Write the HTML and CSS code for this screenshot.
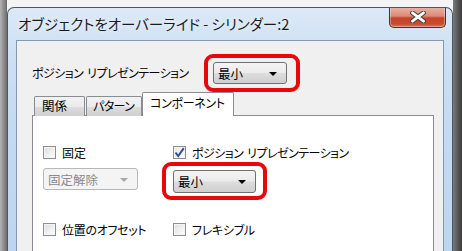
FILE: index.html
```html
<!DOCTYPE html>
<html lang="ja">
<head>
<meta charset="utf-8">
<title>オブジェクトをオーバーライド</title>
<link rel="stylesheet" href="styles.css">
</head>
<body>
<div class="window">
  <div class="titlebar">
    <div class="title">オブジェクトをオーバーライド - シリンダー:2</div>
    <div class="close">
      <svg width="16" height="12" viewBox="0 0 16 12">
        <path d="M2.5 1.8 L13.5 10.2 M13.5 1.8 L2.5 10.2" stroke="#3a3a3a" stroke-width="4.6" stroke-linecap="round"/>
        <path d="M2.5 1.8 L13.5 10.2 M13.5 1.8 L2.5 10.2" stroke="#ffffff" stroke-width="2.8" stroke-linecap="round"/>
      </svg>
    </div>
  </div>
  <div class="client">
    <div class="top-row">
      <div class="label wide">ポジション<span class="sp"></span>リプレゼンテーション</div>
      <div class="hl hl-top">
        <div class="select s-top"><span>最小</span><i class="arrow"></i></div>
      </div>
    </div>
    <div class="tabs">
      <div class="tab t1">関係</div>
      <div class="tab t2">パターン</div>
      <div class="tab active">コンポーネント</div>
    </div>
    <div class="panel">
      <div class="grid">
        <label class="check c1"><span class="box"></span><span>固定</span></label>
        <label class="check c2"><span class="box on"><svg width="11" height="11" viewBox="0 0 11 11"><path d="M1.5 5.5 L4.2 9 L9.8 1.2" fill="none" stroke="#2f4f9e" stroke-width="2"/></svg></span><span class="wide">ポジション<span class="sp"></span>リプレゼンテーション</span></label>
        <div class="select disabled"><span>固定解除</span><i class="arrow"></i></div>
        <div class="hl hl-low">
          <div class="select s-low"><span>最小</span><i class="arrow"></i></div>
        </div>
        <label class="check c1 r3"><span class="box"></span><span class="kana">位置のオフセット</span></label>
        <label class="check c2 r3"><span class="box"></span><span class="kana">フレキシブル</span></label>
      </div>
    </div>
  </div>
</div>
</body>
</html>
```

FILE: styles.css
```css
html, body {
  margin: 0;
  padding: 0;
  height: 251px;
  overflow: hidden;
}
body {
  background: linear-gradient(to right, #b4b4b4 0px, #6c6c6c 7px, #f4f4f4 7px, #f4f4f4 453px, #7a7a7a 453px, #3a3a3a 462px);
  font-family: "Noto Sans CJK JP", "Noto Sans", sans-serif;
  font-feature-settings: "palt" 1;
  color: #000;
}
.window {
  margin: 7px 0 0 7px;
  width: 446px;
  height: 244px;
  box-sizing: border-box;
  border: 1px solid #4a5866;
  border-bottom: none;
  border-radius: 7px 7px 0 0;
  background: linear-gradient(to bottom, #dce9f6 0px, #cfe1f3 40px, #c4daf0 120px, #bdd5ee 244px);
  padding: 0 8px;
  overflow: hidden;
}
.titlebar {
  height: 32px;
  display: flex;
  align-items: flex-start;
}
.title {
  margin-top: 7px;
  padding-left: 2px;
  font-size: 14.5px;
  line-height: 18px;
  color: #1b1b1b;
  text-shadow: 0 0 6px rgba(255,255,255,0.9);
  flex: 1;
  white-space: nowrap;
}
.close {
  margin-top: -1px;
  margin-right: -2px;
  width: 57px;
  height: 21px;
  box-sizing: border-box;
  border: 1px solid #5e2a20;
  border-top: none;
  border-radius: 0 0 5px 5px;
  background: linear-gradient(to bottom, #eab4a6 0%, #dc8b76 45%, #c7432b 55%, #c94a30 85%, #d8755b 100%);
  display: flex;
  align-items: center;
  justify-content: center;
  box-shadow: inset 0 0 0 1px rgba(255,255,255,0.35);
}
.client {
  border: 1px solid #8399b2;
  border-bottom: none;
  background: #f0f0f0;
  height: 210px;
  padding: 0 9px 0 15px;
  overflow: hidden;
}
.top-row {
  display: flex;
  align-items: center;
  padding-top: 13px;
}
.label {
  width: 172px;
  font-size: 12px;
  line-height: 16px;
  white-space: nowrap;
}
.wide {
  letter-spacing: -0.55px;
  white-space: nowrap;
}
.sp {
  display: inline-block;
  width: 4px;
}
.kana {
  letter-spacing: -0.3px;
  white-space: nowrap;
}
.hl {
  border: 4px solid #e8080c;
  border-radius: 9px;
}
.hl-top {
  padding: 4px 9px 4px 5px;
}
.select {
  box-sizing: border-box;
  border: 1px solid #707070;
  border-radius: 3px;
  background: linear-gradient(to bottom, #f4f4f4 0%, #ebebeb 48%, #dddddd 52%, #cfcfcf 100%);
  display: flex;
  align-items: center;
  justify-content: space-between;
  padding: 0 9px 0 4px;
  font-size: 12.5px;
  white-space: nowrap;
}
.arrow {
  width: 0;
  height: 0;
  border-left: 4px solid transparent;
  border-right: 4px solid transparent;
  border-top: 4px solid #000;
  margin-top: 1px;
}
.s-top {
  width: 74px;
  height: 22px;
}
.tabs {
  display: flex;
  align-items: flex-end;
  margin-left: 2px;
  height: 24px;
  margin-bottom: -1px;
  position: relative;
  z-index: 1;
}
.tab {
  box-sizing: border-box;
  height: 20px;
  border: 1px solid #898c95;
  border-bottom: none;
  border-radius: 2px 2px 0 0;
  background: linear-gradient(to bottom, #f2f2f2 0%, #ebebeb 50%, #dddddd 51%, #cfcfcf 100%);
  font-size: 12.5px;
  line-height: 18px;
  white-space: nowrap;
  overflow: hidden;
}
.t1 { width: 51px; margin-right: 1px; padding-left: 7px; }
.t2 { width: 56px; padding-left: 6px; font-size: 12px; letter-spacing: -0.6px; }
.tab.active {
  width: 92px;
  height: 24px;
  background: #fff;
  padding-left: 7px;
  line-height: 20px;
  font-size: 12px;
  letter-spacing: -0.3px;
}
.panel {
  width: 402px;
  height: 140px;
  box-sizing: border-box;
  border: 1px solid #898c95;
  border-bottom: none;
  background: #fff;
}
.grid {
  display: grid;
  grid-template-columns: 119px auto;
  justify-content: start;
  padding: 29px 0 0 10px;
}
.check {
  display: flex;
  align-items: center;
  font-size: 12px;
  line-height: 15px;
  height: 15px;
}
.check.c2 {
  padding-left: 11px;
}
.box {
  width: 13px;
  height: 13px;
  box-sizing: border-box;
  border: 1px solid #8e8f8f;
  background: linear-gradient(135deg, #dcdcdc 0%, #f0f0f0 55%, #ffffff 100%);
  box-shadow: inset 0 0 0 1px #f4f4f4;
  margin-right: 6px;
  display: flex;
  align-items: center;
  justify-content: center;
}
.box.on {
  background: linear-gradient(135deg, #e4e4e4 0%, #f7f7f7 60%, #ffffff 100%);
}
.select.disabled {
  width: 95px;
  height: 22px;
  margin-top: 8px;
  border-color: #b8b8b8;
  background: #f4f4f4;
  color: #8a8a8a;
}
.select.disabled .arrow {
  border-top-color: #a8a8a8;
}
.hl-low {
  margin-top: 2px;
  justify-self: start;
  padding: 4px 7px 3px 7px;
}
.s-low {
  width: 83px;
  height: 23px;
}
.r3 {
  margin-top: 22px;
}
```
